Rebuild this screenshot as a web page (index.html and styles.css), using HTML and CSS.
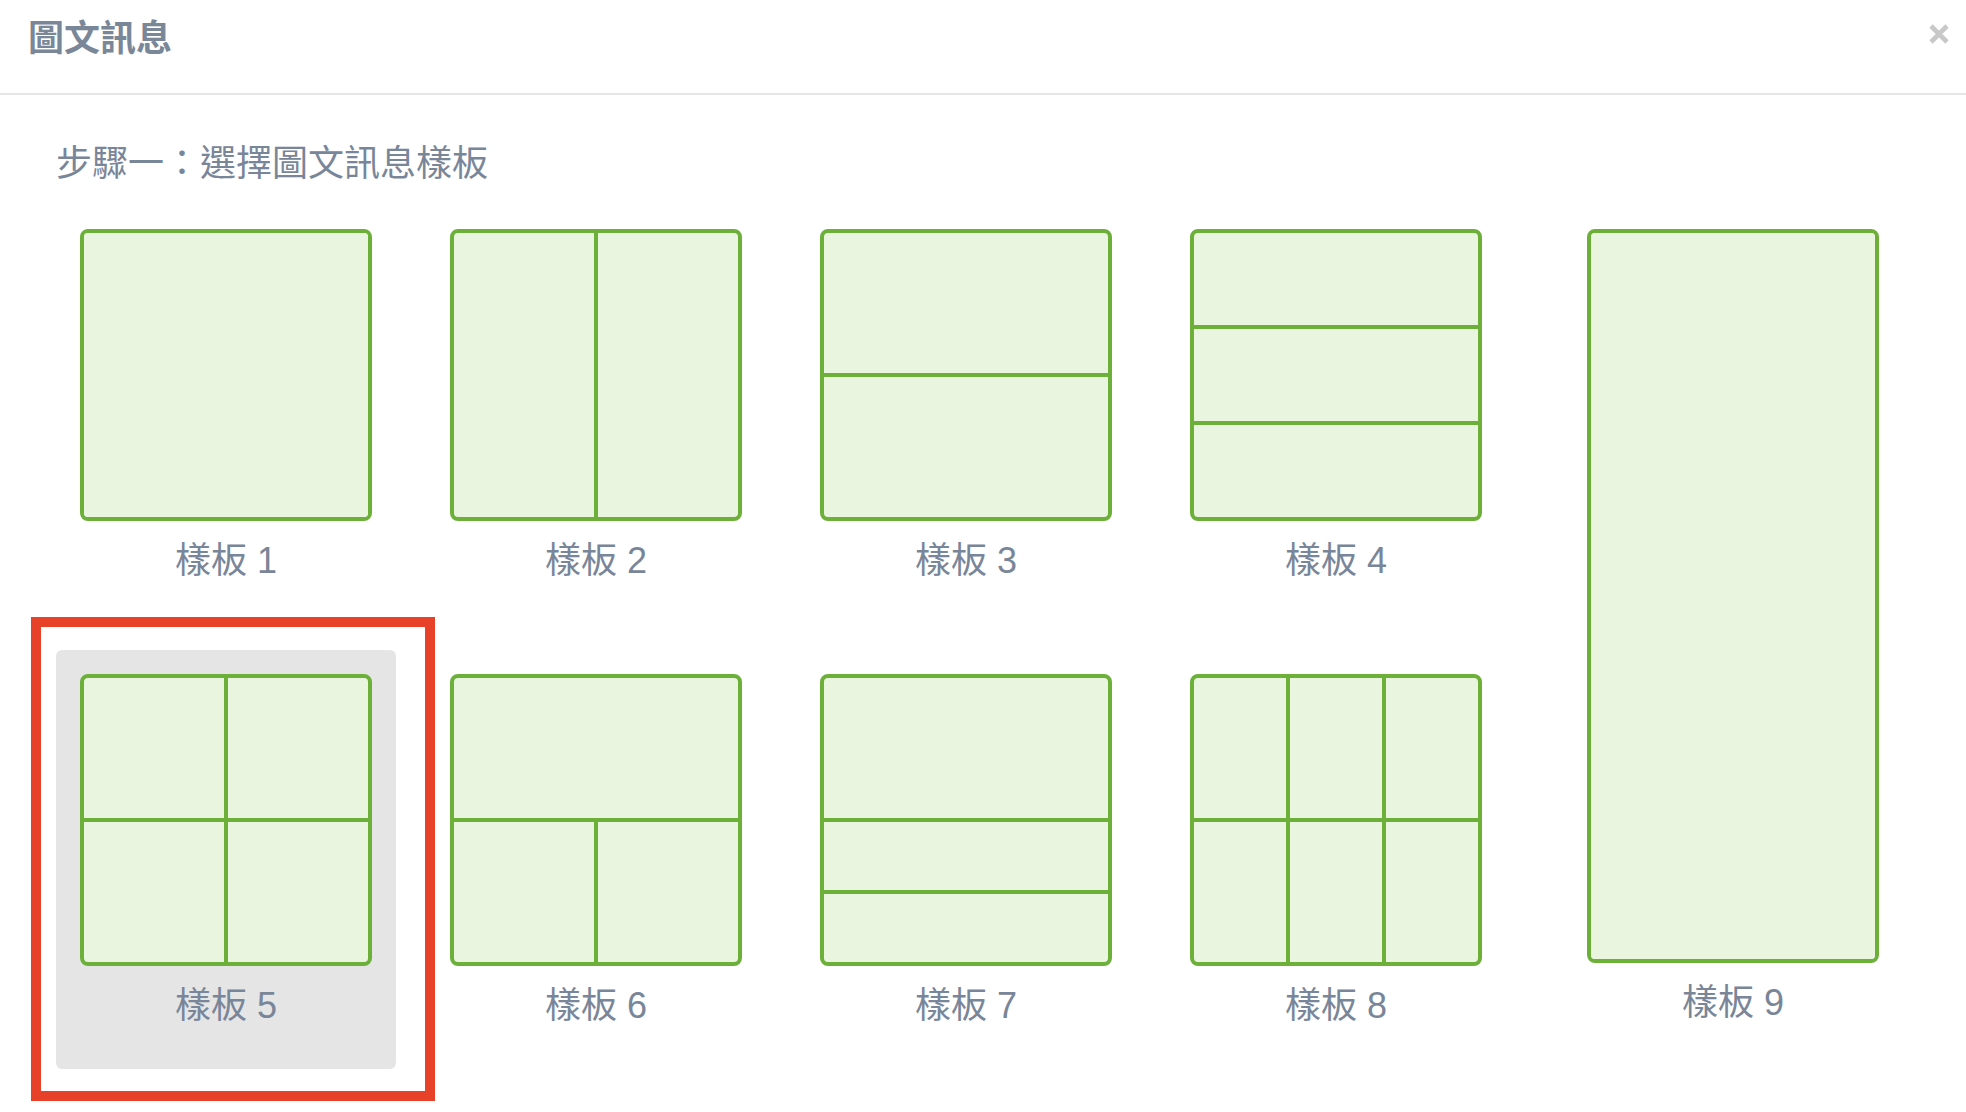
FILE: index.html
```html
<!DOCTYPE html>
<html lang="zh-Hant">
<head>
<meta charset="utf-8">
<title>圖文訊息</title>
<link rel="stylesheet" href="styles.css">
</head>
<body>
<div class="modal">
  <header class="modal-header">
    <h1 class="modal-title">圖文訊息</h1>
    <button class="close" type="button" aria-label="關閉">
      <svg width="22" height="22" viewBox="0 0 22 22"><path d="M3 3 L19 19 M19 3 L3 19" stroke="#c8c8c8" stroke-width="4.6" fill="none"/></svg>
    </button>
  </header>
  <div class="modal-body">
    <h2 class="step">步驟一：選擇圖文訊息樣板</h2>
    <div class="templates">
      <div class="grid">
        <div class="tile">
          <div class="layout l1"><span></span></div>
          <div class="label">樣板 1</div>
        </div>
        <div class="tile">
          <div class="layout l2"><span></span><span></span></div>
          <div class="label">樣板 2</div>
        </div>
        <div class="tile">
          <div class="layout l3"><span></span><span></span></div>
          <div class="label">樣板 3</div>
        </div>
        <div class="tile">
          <div class="layout l4"><span></span><span></span><span></span></div>
          <div class="label">樣板 4</div>
        </div>
        <div class="tile selected">
          <div class="layout l5"><span></span><span></span><span></span><span></span></div>
          <div class="label">樣板 5</div>
        </div>
        <div class="tile">
          <div class="layout l6"><span class="wide"></span><span></span><span></span></div>
          <div class="label">樣板 6</div>
        </div>
        <div class="tile">
          <div class="layout l7"><span></span><span></span><span></span></div>
          <div class="label">樣板 7</div>
        </div>
        <div class="tile">
          <div class="layout l8"><span></span><span></span><span></span><span></span><span></span><span></span></div>
          <div class="label">樣板 8</div>
        </div>
      </div>
      <div class="tile tall">
        <div class="layout l9"><span></span></div>
        <div class="label">樣板 9</div>
      </div>
    </div>
  </div>
</div>
</body>
</html>
```
FILE: styles.css
```css
html, body {
  margin: 0;
  padding: 0;
  background: #ffffff;
}

body {
  font-family: "Liberation Sans", "Noto Sans CJK TC", sans-serif;
  color: #798699;
}

.modal {
  width: 1966px;
  min-height: 1112px;
}

.modal-header {
  box-sizing: border-box;
  height: 95px;
  padding: 21px 16px 0 28px;
  border-bottom: 2px solid #e5e5e5;
  display: flex;
  justify-content: space-between;
  align-items: flex-start;
}

.modal-title {
  margin: 0;
  font-size: 36px;
  line-height: 36px;
  font-weight: 700;
  color: #7a8799;
}

.close {
  margin: 2px 0 0 0;
  padding: 0;
  border: 0;
  background: transparent;
  width: 22px;
  height: 22px;
  display: flex;
}

.modal-body {
  padding: 0 0 45px 56px;
}

.step {
  margin: 51px 0 23px 0;
  font-size: 36px;
  line-height: 36px;
  font-weight: 400;
  color: #798699;
}

.templates {
  display: flex;
  align-items: flex-start;
}

.grid {
  display: grid;
  grid-template-columns: repeat(4, 340px);
  column-gap: 30px;
  row-gap: 26px;
}

.tile {
  position: relative;
  box-sizing: border-box;
  width: 340px;
  padding: 24px 24px 45px 24px;
  border-radius: 6px;
}

.tile.selected {
  background: #e5e5e5;
}

.tile.selected::after {
  content: "";
  position: absolute;
  top: -33px;
  left: -25px;
  right: -39px;
  bottom: -32px;
  border: 10px solid #e8412a;
  pointer-events: none;
}

.tall {
  margin-left: 57px;
}

.layout {
  box-sizing: border-box;
  width: 292px;
  height: 292px;
  border: 4px solid #6cb03a;
  border-radius: 8px;
  background: #6cb03a;
  display: grid;
  gap: 4px;
  overflow: hidden;
}

.layout span {
  background: #eaf5e0;
}

.l1 {
  grid-template: 1fr / 1fr;
}

.l2 {
  grid-template-columns: 1fr 1fr;
}

.l3 {
  grid-template-rows: 1fr 1fr;
}

.l4 {
  grid-template-rows: 1fr 1fr 1fr;
}

.l5 {
  grid-template-columns: 1fr 1fr;
  grid-template-rows: 1fr 1fr;
}

.l6 {
  grid-template-columns: 1fr 1fr;
  grid-template-rows: 1fr 1fr;
}

.l6 .wide {
  grid-column: span 2;
}

.l7 {
  grid-template-rows: 140px 1fr 1fr;
}

.l8 {
  grid-template-columns: 1fr 1fr 1fr;
  grid-template-rows: 1fr 1fr;
}

.l9 {
  height: 734px;
}

.label {
  margin-top: 22px;
  font-size: 36px;
  line-height: 36px;
  text-align: center;
  color: #798699;
}
```
